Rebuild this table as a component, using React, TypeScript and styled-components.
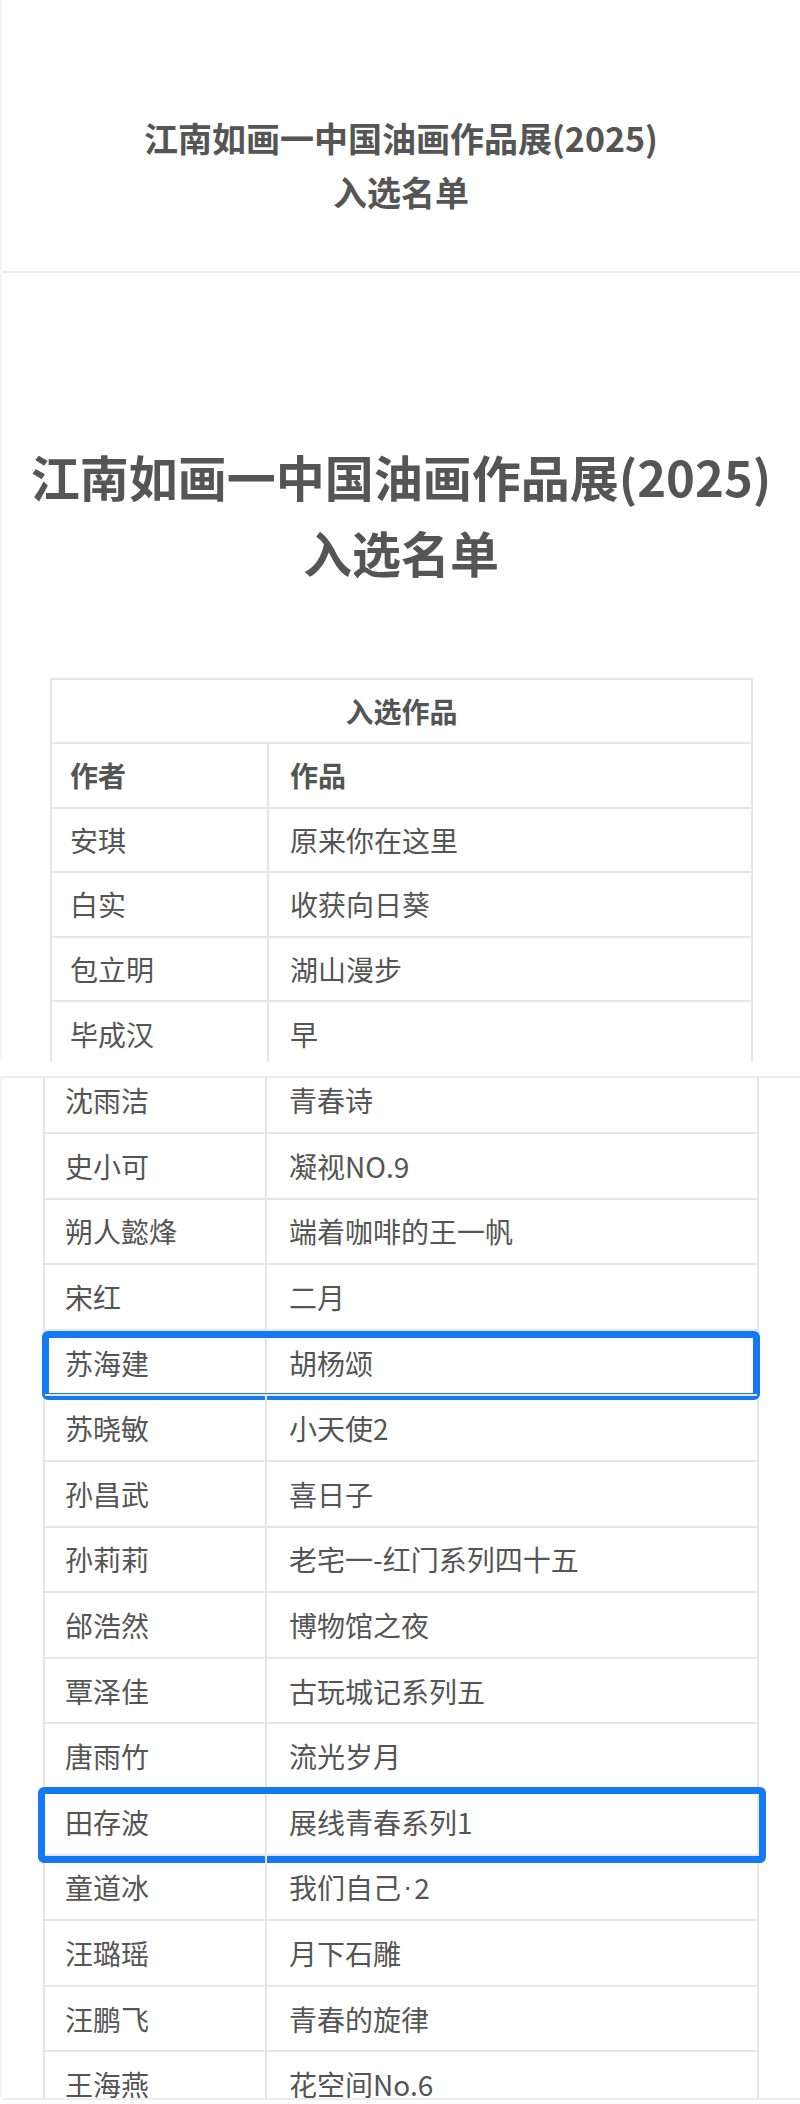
import React from 'react';
import styled, { createGlobalStyle } from 'styled-components';

const GlobalStyle = createGlobalStyle`
  html, body {
    margin: 0;
    padding: 0;
    background: #fff;
  }
  body {
    font-family: "Noto Sans CJK SC", "Noto Sans", sans-serif;
    color: #555;
  }
`;

const Page = styled.main`
  width: 800px;
  height: 2104px;
  overflow: hidden;
  background: #fff;
`;

const Shot = styled.section<{ $height: number; $padTop: number; $gapTop?: number }>`
  position: relative;
  height: ${p => p.$height}px;
  padding-top: ${p => p.$padTop}px;
  margin-top: ${p => p.$gapTop || 0}px;
  box-sizing: border-box;
  overflow: hidden;
  border-left: 2px solid #f4f4f4;
`;

const Divider = styled.hr<{ $inset?: number }>`
  margin: 0 0 0 ${p => (p.$inset === undefined ? 3 : p.$inset)}px;
  height: 2px;
  border: 0;
  background: #ededed;
`;

const Title = styled.h1<{ $size: number; $line: number }>`
  margin: 0;
  text-align: center;
  font-size: ${p => p.$size}px;
  line-height: ${p => p.$line}px;
  font-weight: 700;
  color: #555;
`;

const Table = styled.div<{ $left: number; $width: number; $top: number }>`
  margin-left: ${p => p.$left}px;
  margin-top: ${p => p.$top}px;
  width: ${p => p.$width}px;
  box-sizing: border-box;
  border-left: 2px solid #e6e6e6;
  border-right: 2px solid #e6e6e6;
`;

const Row = styled.div<{ $col: number; $h: number }>`
  position: relative;
  display: grid;
  grid-template-columns: ${p => p.$col}px 1fr;
  height: ${p => p.$h}px;
  box-sizing: border-box;
  border-top: 2px solid #e6e6e6;
`;

const Cell = styled.div<{ $pad: number; $bold?: boolean; $span?: boolean }>`
  display: flex;
  align-items: center;
  justify-content: ${p => (p.$span ? 'center' : 'flex-start')};
  grid-column: ${p => (p.$span ? '1 / -1' : 'auto')};
  padding-left: ${p => (p.$span ? 0 : p.$pad)}px;
  font-size: 28px;
  font-weight: ${p => (p.$bold ? 700 : 400)};
  color: #555;
  white-space: pre;
  &:first-child:not(:last-child) {
    border-right: 2px solid #e6e6e6;
  }
`;

// half-width middle dot, the CJK font draws it full width
const Dot = styled.span`
  font-family: "Liberation Sans", sans-serif;
  padding: 0 2px;
`;

const Highlight = styled.span<{ $l: number; $r: number; $t: number; $b: number }>`
  position: absolute;
  left: ${p => p.$l}px;
  right: ${p => p.$r}px;
  top: ${p => p.$t}px;
  bottom: ${p => p.$b}px;
  border: 7px solid #1479f2;
  border-radius: 6px;
  pointer-events: none;
`;

type Entry = { name: string; work: string; mark?: { l: number; r: number; t: number; b: number } };

const firstList: Entry[] = [
  { name: '安琪', work: '原来你在这里' },
  { name: '白实', work: '收获向日葵' },
  { name: '包立明', work: '湖山漫步' },
  { name: '毕成汉', work: '早' },
];

const secondList: Entry[] = [
  { name: '沈雨洁', work: '青春诗' },
  { name: '史小可', work: '凝视NO.9' },
  { name: '朔人懿烽', work: '端着咖啡的王一帆' },
  { name: '宋红', work: '二月' },
  { name: '苏海建', work: '胡杨颂', mark: { l: -3, r: -3, t: 0, b: -6 } },
  { name: '苏晓敏', work: '小天使2' },
  { name: '孙昌武', work: '喜日子' },
  { name: '孙莉莉', work: '老宅一-红门系列四十五' },
  { name: '邰浩然', work: '博物馆之夜' },
  { name: '覃泽佳', work: '古玩城记系列五' },
  { name: '唐雨竹', work: '流光岁月' },
  { name: '田存波', work: '展线青春系列1', mark: { l: -7, r: -9, t: -3, b: -9 } },
  { name: '童道冰', work: '我们自己·2' },
  { name: '汪璐瑶', work: '月下石雕' },
  { name: '汪鹏飞', work: '青春的旋律' },
  { name: '王海燕', work: '花空间No.6' },
];

const renderWork = (text: string) => {
  const parts = text.split('·');
  return parts.map((p, i) => (
    <React.Fragment key={i}>
      {i > 0 && <Dot>·</Dot>}
      {p}
    </React.Fragment>
  ));
};

const TitleBlock: React.FC<{ size: number; line: number }> = ({ size, line }) => (
  <Title $size={size} $line={line}>
    江南如画一中国油画作品展(2025)
    <br />
    入选名单
  </Title>
);

export default function App() {
  return (
    <>
      <GlobalStyle />
      <Page>
        <Shot $height={271} $padTop={111}>
          <TitleBlock size={34} line={54} />
        </Shot>
        <Divider />

        <Shot $height={789} $padTop={165}>
          <TitleBlock size={49} line={76} />
          <Table $left={48} $width={703} $top={88}>
            <Row $col={217} $h={64}>
              <Cell $pad={0} $bold $span>
                入选作品
              </Cell>
            </Row>
            <Row $col={217} $h={64.6}>
              <Cell $pad={18} $bold>作者</Cell>
              <Cell $pad={21} $bold>作品</Cell>
            </Row>
            {firstList.map(e => (
              <Row key={e.name} $col={217} $h={64.6}>
                <Cell $pad={18}>{e.name}</Cell>
                <Cell $pad={21}>{renderWork(e.work)}</Cell>
              </Row>
            ))}
          </Table>
        </Shot>

        <Shot $height={1022} $padTop={0} $gapTop={14}>
          <Divider $inset={0} />
          <Table $left={41} $width={716} $top={-11.6}>
            {secondList.map(e => (
              <Row key={e.name} $col={222} $h={65.6}>
                <Cell $pad={20}>{e.name}</Cell>
                <Cell $pad={22}>{renderWork(e.work)}</Cell>
                {e.mark && <Highlight $l={e.mark.l} $r={e.mark.r} $t={e.mark.t} $b={e.mark.b} />}
              </Row>
            ))}
          </Table>
        </Shot>
        <Divider />
      </Page>
    </>
  );
}
